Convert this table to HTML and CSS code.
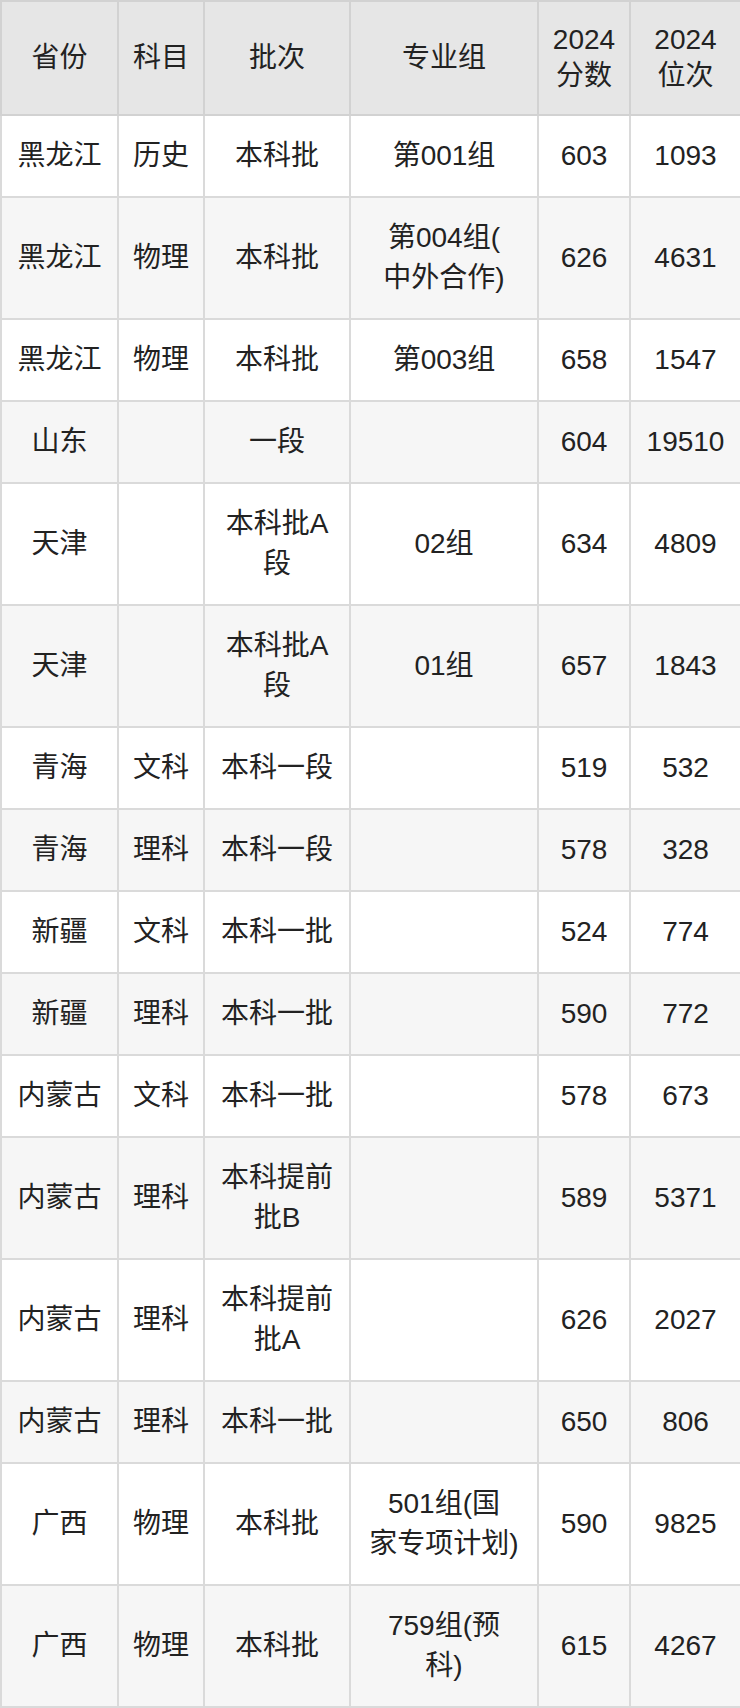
FILE: index.html
```html
<!DOCTYPE html>
<html lang="zh-CN">
<head>
<meta charset="utf-8">
<title>2024 分数位次</title>
<link rel="stylesheet" href="styles.css">
</head>
<body>
<table class="score-table">
  <colgroup>
    <col class="c-prov">
    <col class="c-subj">
    <col class="c-batch">
    <col class="c-group">
    <col class="c-score">
    <col class="c-rank">
  </colgroup>
  <thead>
    <tr>
      <th>省份</th>
      <th>科目</th>
      <th>批次</th>
      <th>专业组</th>
      <th>2024<br>分数</th>
      <th>2024<br>位次</th>
    </tr>
  </thead>
  <tbody>
    <tr><td>黑龙江</td><td>历史</td><td>本科批</td><td>第001组</td><td>603</td><td>1093</td></tr>
    <tr><td>黑龙江</td><td>物理</td><td>本科批</td><td>第004组(<br>中外合作)</td><td>626</td><td>4631</td></tr>
    <tr><td>黑龙江</td><td>物理</td><td>本科批</td><td>第003组</td><td>658</td><td>1547</td></tr>
    <tr><td>山东</td><td></td><td>一段</td><td></td><td>604</td><td>19510</td></tr>
    <tr><td>天津</td><td></td><td>本科批A<br>段</td><td>02组</td><td>634</td><td>4809</td></tr>
    <tr><td>天津</td><td></td><td>本科批A<br>段</td><td>01组</td><td>657</td><td>1843</td></tr>
    <tr><td>青海</td><td>文科</td><td>本科一段</td><td></td><td>519</td><td>532</td></tr>
    <tr><td>青海</td><td>理科</td><td>本科一段</td><td></td><td>578</td><td>328</td></tr>
    <tr><td>新疆</td><td>文科</td><td>本科一批</td><td></td><td>524</td><td>774</td></tr>
    <tr><td>新疆</td><td>理科</td><td>本科一批</td><td></td><td>590</td><td>772</td></tr>
    <tr><td>内蒙古</td><td>文科</td><td>本科一批</td><td></td><td>578</td><td>673</td></tr>
    <tr><td>内蒙古</td><td>理科</td><td>本科提前<br>批B</td><td></td><td>589</td><td>5371</td></tr>
    <tr><td>内蒙古</td><td>理科</td><td>本科提前<br>批A</td><td></td><td>626</td><td>2027</td></tr>
    <tr><td>内蒙古</td><td>理科</td><td>本科一批</td><td></td><td>650</td><td>806</td></tr>
    <tr><td>广西</td><td>物理</td><td>本科批</td><td>501组(国<br>家专项计划)</td><td>590</td><td>9825</td></tr>
    <tr><td>广西</td><td>物理</td><td>本科批</td><td>759组(预<br>科)</td><td>615</td><td>4267</td></tr>
  </tbody>
</table>
</body>
</html>
```

FILE: styles.css
```css
html, body {
  margin: 0;
  padding: 0;
  background: #ffffff;
}

body {
  font-family: "Liberation Sans", "Noto Sans CJK SC", sans-serif;
  color: #222222;
}

.score-table {
  width: 740px;
  border-collapse: collapse;
  table-layout: fixed;
  font-size: 28px;
}

.c-prov { width: 117px; }
.c-subj { width: 86px; }
.c-batch { width: 146px; }
.c-group { width: 188px; }
.c-score { width: 92px; }
.c-rank { width: 111px; }

.score-table th,
.score-table td {
  border: 2px solid #dadada;
  text-align: center;
  vertical-align: middle;
  white-space: nowrap;
  padding: 20px 2px;
}

.score-table th {
  background: #e6e6e6;
  font-weight: normal;
  line-height: 36px;
  border-color: #d2d2d2;
}

.score-table td {
  line-height: 40px;
}

.score-table tbody tr:nth-child(even) td {
  background: #f6f6f6;
}
```
